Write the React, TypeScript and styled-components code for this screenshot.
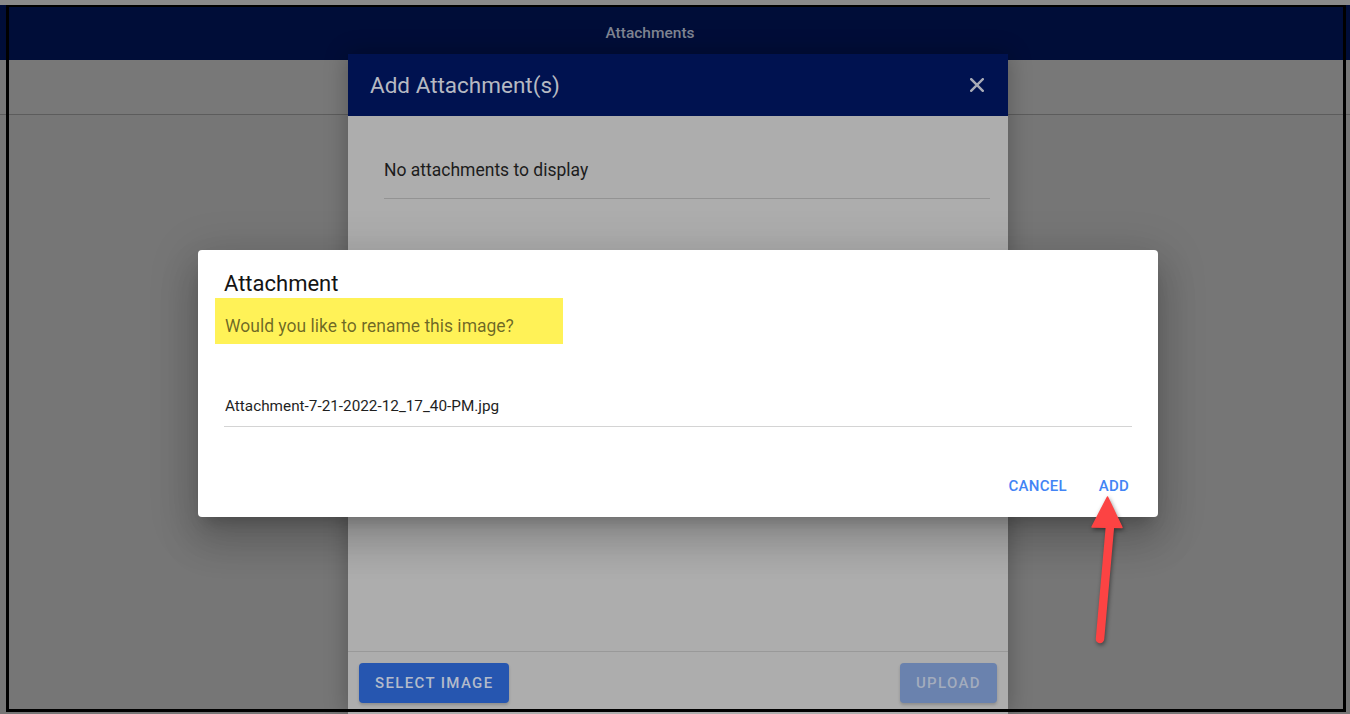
import React from "react";
import styled, { createGlobalStyle } from "styled-components";

const GlobalStyle = createGlobalStyle`
  html, body {
    margin: 0;
    padding: 0;
    background: #8a8a8a;
  }
  body {
    font-family: Roboto, "Liberation Sans", Arial, sans-serif;
    -webkit-font-smoothing: antialiased;
  }
  * { box-sizing: border-box; }
`;

const Screen = styled.div`
  position: relative;
  width: 1350px;
  height: 714px;
  overflow: hidden;
  padding-top: 5px;
  background: #8a8a8a;
  display: flex;
  flex-direction: column;
`;

const AppBar = styled.header`
  height: 55px;
  flex: none;
  background: #000d38;
  display: flex;
  align-items: center;
  justify-content: center;
  padding: 1px 50px 0 0;
`;

const AppTitle = styled.span`
  font-size: 15.5px;
  font-weight: 500;
  color: #7f8492;
`;

const SubBar = styled.div`
  height: 55px;
  flex: none;
  background: #787878;
  border-bottom: 1px solid #5c5c5c;
`;

const Content = styled.main`
  flex: 1;
  background: #767676;
`;

const Modal = styled.section`
  position: absolute;
  left: 348px;
  top: 54px;
  width: 660px;
  bottom: 0;
  display: flex;
  flex-direction: column;
  background: #adadad;
  box-shadow: 0 0 22px rgba(0, 0, 0, 0.28);
`;

const ModalHeader = styled.div`
  height: 62px;
  flex: none;
  background: #001250;
  display: flex;
  align-items: center;
  justify-content: space-between;
  padding: 0 22px 0 22px;
`;

const ModalTitle = styled.h2`
  margin: 0;
  font-size: 22.5px;
  font-weight: 400;
  color: #b6b9c2;
  line-height: 26px;
`;

const CloseButton = styled.button`
  border: 0;
  background: transparent;
  padding: 0;
  width: 14px;
  height: 14px;
  display: flex;
  margin-right: 2px;
`;

const ModalBody = styled.div`
  flex: 1;
  padding: 26px 18px 0 36px;
`;

const ListRow = styled.div`
  padding: 16px 0 16px;
  line-height: 24px;
  font-size: 17.5px;
  color: #1c1c1c;
  border-bottom: 1px solid #939393;
`;

const ModalFooter = styled.div`
  flex: none;
  height: 63px;
  border-top: 1px solid #999999;
  padding: 11px 11px 0;
  display: flex;
  justify-content: space-between;
  align-items: flex-start;
`;

const ContainedButton = styled.button<{ $disabled?: boolean }>`
  height: 40px;
  border: 0;
  border-radius: 4px;
  padding: 0 16px;
  font-family: inherit;
  font-size: 15px;
  font-weight: 500;
  letter-spacing: 1.35px;
  text-transform: uppercase;
  background: ${(p) => (p.$disabled ? "#6a82ae" : "#2656b0")};
  color: ${(p) => (p.$disabled ? "#a3acbd" : "#b3bbca")};
  box-shadow: 0 2px 3px rgba(0, 0, 0, 0.18);
`;

const Dialog = styled.div`
  position: absolute;
  left: 198px;
  top: 250px;
  width: 960px;
  height: 267px;
  background: #ffffff;
  border-radius: 4px;
  padding: 21px 26px 0;
  display: flex;
  flex-direction: column;
  box-shadow: 0 11px 15px -7px rgba(0, 0, 0, 0.2),
    0 24px 38px 3px rgba(0, 0, 0, 0.14), 0 9px 46px 8px rgba(0, 0, 0, 0.12);
`;

const DialogTitle = styled.h3`
  margin: 0;
  font-size: 22px;
  font-weight: 400;
  line-height: 26px;
  color: #141414;
`;

const Highlight = styled.div`
  margin: 1px 0 0 -9px;
  width: 348px;
  height: 46px;
  padding: 16px 0 0 10px;
  background: #fff257;
  font-size: 17.5px;
  line-height: 24px;
  color: rgba(0, 0, 0, 0.58);
`;

const InputWrap = styled.div`
  margin-top: 46px;
  padding: 6px 0 10px 1px;
  border-bottom: 1px solid #d4d4d4;
`;

const TextInput = styled.input`
  border: 0;
  outline: none;
  padding: 0;
  width: 100%;
  font-family: inherit;
  font-size: 15.3px;
  line-height: 20px;
  height: 20px;
  color: #1f1f1f;
  background: transparent;
`;

const Actions = styled.div`
  margin-top: auto;
  display: flex;
  justify-content: flex-end;
  gap: 7px;
  padding: 0 0 12px;
  margin-right: -14px;
`;

const TextButton = styled.button`
  min-width: 64px;
  padding: 6px 8px;
  border: 0;
  background: transparent;
  font-family: inherit;
  font-size: 15px;
  font-weight: 500;
  line-height: 26px;
  letter-spacing: 0.3px;
  text-transform: uppercase;
  color: #4384f5;
`;

const Arrow = styled.svg`
  position: absolute;
  left: 1085px;
  top: 492px;
  width: 45px;
  height: 156px;
  overflow: visible;
  filter: drop-shadow(1px 2px 2px rgba(0, 0, 0, 0.45));
`;

const Frame = styled.div`
  position: absolute;
  left: 6px;
  top: 5px;
  width: 1340px;
  height: 707px;
  border: 3px solid #000;
  border-top-width: 2.5px;
  pointer-events: none;
`;

export default function App() {
  return (
    <>
      <GlobalStyle />
      <Screen>
        <AppBar>
          <AppTitle>Attachments</AppTitle>
        </AppBar>
        <SubBar />
        <Content />

        <Modal>
          <ModalHeader>
            <ModalTitle>Add Attachment(s)</ModalTitle>
            <CloseButton aria-label="close">
              <svg width="14" height="14" viewBox="0 0 14 14">
                <path
                  d="M1.2 1.2 L12.8 12.8 M12.8 1.2 L1.2 12.8"
                  stroke="#a9acb6"
                  strokeWidth="2.4"
                  strokeLinecap="square"
                />
              </svg>
            </CloseButton>
          </ModalHeader>
          <ModalBody>
            <ListRow>No attachments to display</ListRow>
          </ModalBody>
          <ModalFooter>
            <ContainedButton>Select Image</ContainedButton>
            <ContainedButton $disabled>Upload</ContainedButton>
          </ModalFooter>
        </Modal>

        <Dialog>
          <DialogTitle>Attachment</DialogTitle>
          <Highlight>Would you like to rename this image?</Highlight>
          <InputWrap>
            <TextInput defaultValue="Attachment-7-21-2022-12_17_40-PM.jpg" />
          </InputWrap>
          <Actions>
            <TextButton>Cancel</TextButton>
            <TextButton>Add</TextButton>
          </Actions>
        </Dialog>

        <Arrow viewBox="0 0 45 156">
          <line
            x1="25"
            y1="34"
            x2="15"
            y2="147"
            stroke="#fc4343"
            strokeWidth="8.5"
            strokeLinecap="round"
          />
          <path
            d="M22.5 5 L37 35.5 L7 35 Z"
            fill="#fc4343"
            stroke="#fc4343"
            strokeWidth="1.5"
            strokeLinejoin="round"
          />
        </Arrow>

        <Frame />
      </Screen>
    </>
  );
}
